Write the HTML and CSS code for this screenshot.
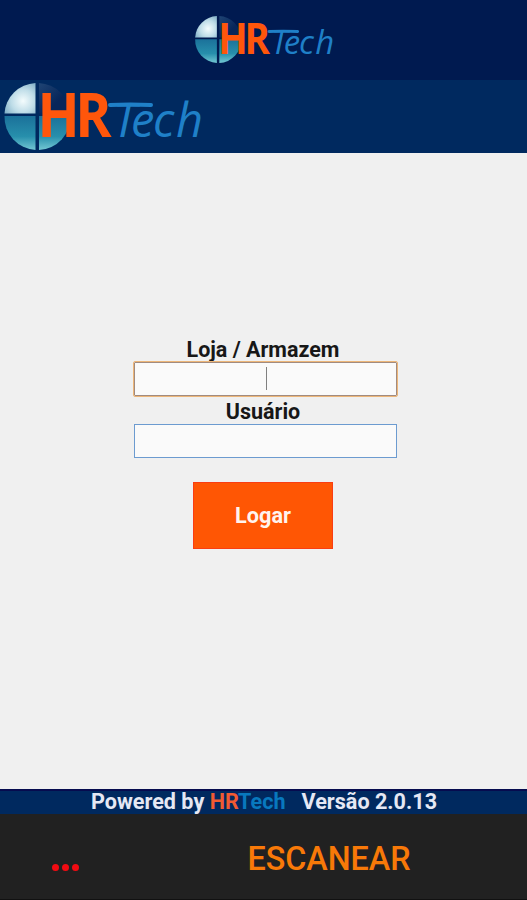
FILE: index.html
```html
<!DOCTYPE html>
<html lang="pt-BR">
<head>
<meta charset="utf-8">
<title>HRTech</title>
<link rel="stylesheet" href="styles.css">
</head>
<body>
<header class="topbar">
  <svg class="logo logo-small" viewBox="0 0 206 74" role="img" aria-label="HRTech">
    <defs>
      <radialGradient id="light" gradientUnits="userSpaceOnUse" cx="23" cy="21" r="29">
        <stop offset="0" stop-color="#f4fcfd"/><stop offset=".4" stop-color="#bfdde8"/><stop offset="1" stop-color="#528eae"/>
      </radialGradient>
      <linearGradient id="teal" gradientUnits="userSpaceOnUse" x1="0" y1="36" x2="0" y2="70">
        <stop offset="0" stop-color="#1b719a"/><stop offset=".6" stop-color="#278fac"/><stop offset="1" stop-color="#73c7d3"/>
      </linearGradient>
      <linearGradient id="shade" x1="0" y1="0" x2="1" y2="1">
        <stop offset="0" stop-color="#1f4474"/><stop offset=".6" stop-color="#07265a"/><stop offset="1" stop-color="#07265a"/>
      </linearGradient>
    </defs>
    <path fill="url(#light)" d="M35.500 33.500H4.500A33 32 0 0 1 35.500 3Z"/>
    <path fill="url(#shade)" d="M39 33.500V3A33 32 0 0 1 70 33.500Z"/>
    <path fill="url(#teal)" d="M4.500 36H35.500V70A33 33 0 0 1 4.500 36Z"/>
    <path fill="url(#teal)" d="M39 36H70.500A33 33 0 0 1 39 70Z"/>
    <text class="logo-hr" x="37.500" y="57" textLength="69.500" lengthAdjust="spacingAndGlyphs">HR</text>
    <path class="logo-bar" d="M110 25Q130 24 151 25"/>
    <text class="logo-tech" x="113 131 153 176" y="57">Tech</text>
  </svg>
</header>
<div class="brandbar">
  <svg class="logo logo-large" viewBox="0 0 206 74" role="img" aria-label="HRTech">
    <path fill="url(#light)" d="M35.500 33.500H4.500A33 32 0 0 1 35.500 3Z"/>
    <path fill="url(#shade)" d="M39 33.500V3A33 32 0 0 1 70 33.500Z"/>
    <path fill="url(#teal)" d="M4.500 36H35.500V70A33 33 0 0 1 4.500 36Z"/>
    <path fill="url(#teal)" d="M39 36H70.500A33 33 0 0 1 39 70Z"/>
    <text class="logo-hr" x="37.500" y="57" textLength="69.500" lengthAdjust="spacingAndGlyphs">HR</text>
    <path class="logo-bar" d="M110 25Q130 24 151 25"/>
    <text class="logo-tech" x="113 131 153 176" y="57">Tech</text>
  </svg>
</div>
<main class="login">
  <label class="label">Loja / Armazem</label>
  <div class="field field-active"><span class="caret"></span></div>
  <label class="label label-user">Usuário</label>
  <div class="field"></div>
  <button class="submit">Logar</button>
</main>
<footer class="powered">
  <span>Powered by <span class="hr">HR</span><span class="tech">Tech</span></span>
  <span>Versão 2.0.13</span>
</footer>
<nav class="actions">
  <div class="more"><i></i><i></i><i></i></div>
  <div class="scan">ESCANEAR</div>
</nav>
</body>
</html>
```
FILE: styles.css
```css
* { box-sizing: border-box; }
body {
  margin: 0;
  height: 900px;
  display: flex;
  flex-direction: column;
  overflow: hidden;
  background: #f0f0f0;
  font-family: Roboto, "Liberation Sans", sans-serif;
}
.topbar {
  height: 80px;
  flex: none;
  background: #001a50;
  padding: 14px 0 0 192px;
}
.brandbar {
  height: 73px;
  flex: none;
  background: #00295f;
}
.logo { display: block; overflow: visible; }
.logo-small { width: 144.2px; height: 51.8px; }
.logo-large { width: 206px; height: 74px; }
.logo-hr { font: bold 61px "Open Sans", sans-serif; letter-spacing: -5px; fill: #ff560b; }
.logo-tech { font: italic 47px "Open Sans", sans-serif; fill: #1f80c8; }
.logo-bar { fill: none; stroke: #1f80c8; stroke-width: 4; stroke-linecap: round; }
.login {
  flex: 1;
  display: flex;
  flex-direction: column;
  align-items: center;
  padding-top: 184.500px;
}
.label {
  height: 24px;
  line-height: 24px;
  font-size: 21.500px;
  font-weight: 700;
  color: #171717;
  white-space: nowrap;
  margin-right: 1px;
}
.label-user { margin-top: 4px; }
.field {
  width: 263px;
  height: 34px;
  flex: none;
  margin-left: 4px;
  border: 1px solid #6c9bd0;
  background: #fafafa;
  display: flex;
  align-items: center;
  justify-content: center;
}
.field-active {
  border-color: #a18b80;
  outline: 1px solid #edb678;
  border-radius: 1px;
}
.caret { width: 1.500px; height: 23px; margin-left: 2px; background: #808080; }
.submit {
  width: 140px;
  height: 67px;
  margin: 24px 1px 0 0;
  border: 1px solid #fa3d13;
  padding: 0;
  background: #ff5604;
  color: #fff4ef;
  font: bold 21.700px Roboto, sans-serif;
}
.powered {
  height: 25px;
  flex: none;
  border-top: 2px solid #060b4f;
  background: #00295f;
  color: #e5e8f4;
  display: flex;
  justify-content: center;
  gap: 16px;
  padding-left: 1px;
  font-size: 21.600px;
  line-height: 21px;
  font-weight: 700;
  white-space: nowrap;
}
.hr { color: #f15a32; }
.tech { color: #0878be; }
.actions {
  height: 86px;
  flex: none;
  background: #212121;
  border-bottom: 1px solid #111;
  display: grid;
  grid-template-columns: 131px 1fr;
}
.more {
  display: flex;
  justify-content: center;
  gap: 3px;
  padding: 50px 1px 0 0;
}
.more i { width: 7px; height: 7px; border-radius: 50%; background: #f20b12; }
.scan {
  text-align: center;
  font-size: 32.300px;
  font-weight: 500;
  line-height: 90px;
  color: #f87908;
}
```
